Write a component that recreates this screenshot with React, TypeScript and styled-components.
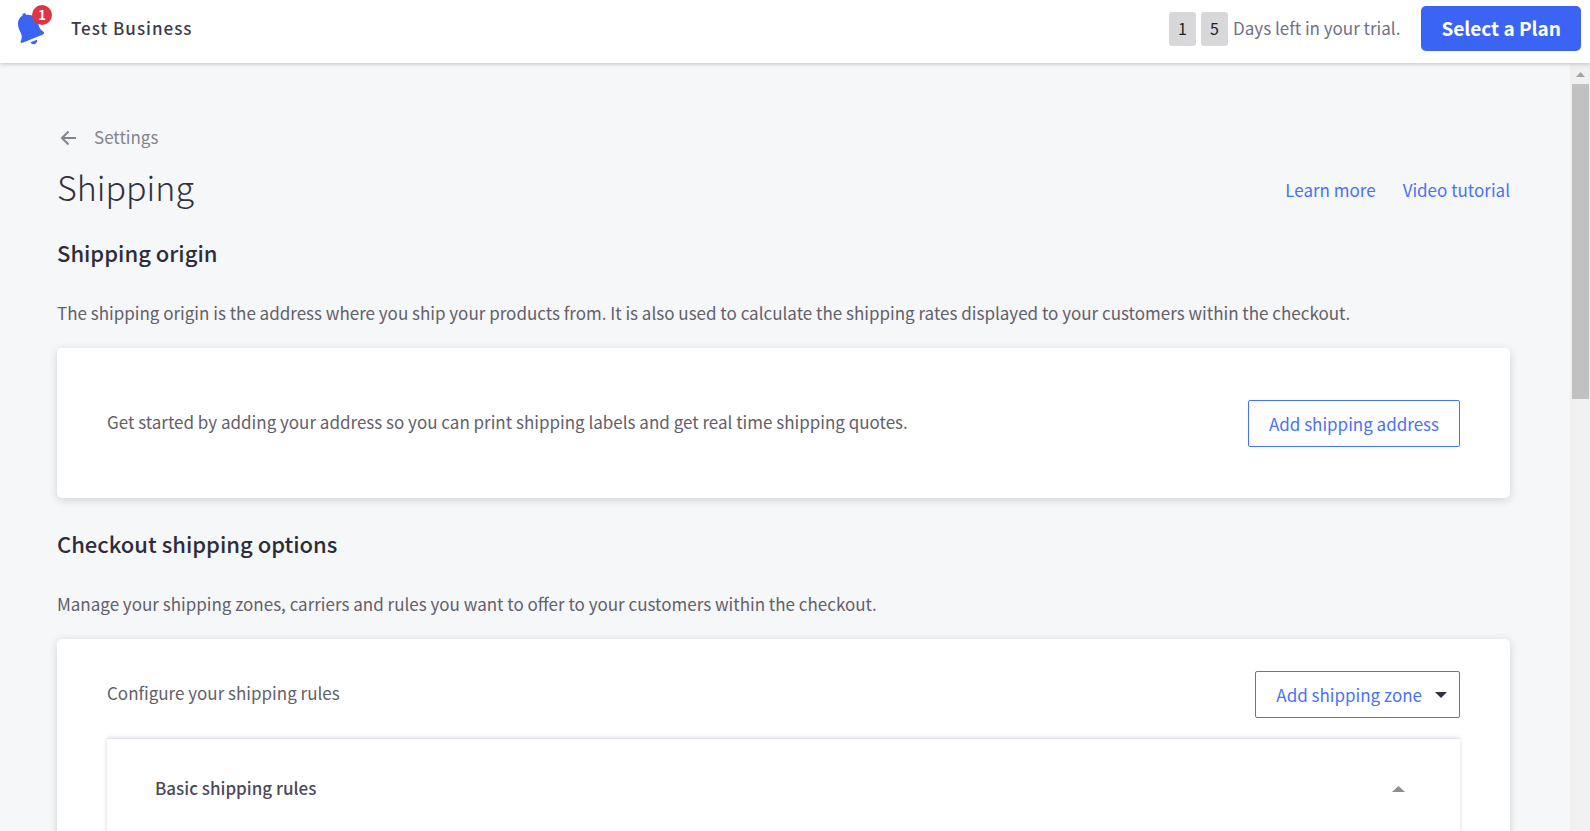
import React from "react";
import styled, { createGlobalStyle } from "styled-components";

const Global = createGlobalStyle`
  *, *::before, *::after { box-sizing: border-box; }
  html, body, #root { height: 100%; margin: 0; }
  body {
    background: #f6f7f9;
    color: #636069;
    font-family: "Noto Sans CJK SC", "Noto Sans", sans-serif;
    font-size: 17px;
    line-height: 24px;
    overflow: hidden;
  }
  h1, h2, h3, p { margin: 0; }
  button { font: inherit; cursor: pointer; }
  a { text-decoration: none; }
`;

const Shell = styled.div`
  display: flex;
  flex-direction: column;
  height: 100vh;
`;

const TopBar = styled.header`
  position: relative;
  z-index: 1;
  display: flex;
  align-items: center;
  flex: none;
  height: 63px;
  padding: 0 9px 6px 16px;
  background: #fff;
  box-shadow: 0 1px 4px rgba(45, 45, 65, 0.25);
`;

const BellButton = styled.button`
  position: relative;
  width: 32px;
  height: 36px;
  margin-right: 23px;
  padding: 0;
  border: 0;
  background: none;

  svg { display: block; }
`;

const Badge = styled.span`
  position: absolute;
  top: -6px;
  right: -4px;
  width: 20px;
  height: 20px;
  border-radius: 50%;
  background: #dc3545;
  color: #fff;
  font-size: 13px;
  font-weight: 700;
  line-height: 20px;
  text-align: center;
`;

const BusinessName = styled.span`
  padding-bottom: 2px;
  color: #3b3a4a;
  font-weight: 500;
  letter-spacing: 1px;
`;

const Trial = styled.div`
  display: flex;
  align-items: center;
  gap: 5px;
  margin: 0 21px 0 auto;
  color: #6f7089;
`;

const TrialText = styled.span`
  padding-bottom: 2px;
`;

const Digit = styled.span`
  display: grid;
  place-items: center;
  width: 27px;
  height: 34px;
  padding-bottom: 1px;
  border-radius: 3px;
  background: #d8d8da;
  color: #222226;
  font-size: 16px;
`;

const PlanButton = styled.button`
  height: 45px;
  padding: 0 20px 2px;
  border: 0;
  border-radius: 5px;
  background: #3c64f4;
  color: #fff;
  font-size: 19px;
  font-weight: 700;
`;

const Body = styled.div`
  display: flex;
  flex: 1;
  min-height: 0;
`;

const Main = styled.main`
  flex: 1;
  min-width: 0;
  padding: 62px 60px 0 57px;
  overflow: hidden;
`;

const BackLink = styled.a`
  display: inline-flex;
  align-items: center;
  gap: 15px;
  color: #85838b;
  vertical-align: top;
`;

const TitleRow = styled.div`
  display: flex;
  align-items: center;
  justify-content: space-between;
  margin-top: 15px;
`;

const Title = styled.h1`
  color: #32303f;
  font-size: 34px;
  font-weight: 200;
  line-height: 46px;
`;

const Links = styled.nav`
  display: flex;
  gap: 27px;
  padding-top: 6px;
`;

const TextLink = styled.a`
  color: #4a71fa;
`;

const Section = styled.section`
  margin-top: 27px;

  & + & { margin-top: 30px; }
`;

const SectionTitle = styled.h2`
  color: #2e2c3b;
  font-size: 22px;
  font-weight: 500;
  line-height: 30px;
`;

const Intro = styled.p`
  margin: 34px 0 23px;
`;

const Card = styled.div<{ $compact?: boolean }>`
  padding: ${(p) => (p.$compact ? "32px 50px" : "52px 50px 51px")};
  border-radius: 5px;
  background: #fff;
  box-shadow: 0 2px 8px rgba(45, 45, 65, 0.18);
`;

const CardRow = styled.div`
  display: flex;
  align-items: center;
  justify-content: space-between;
`;

const CardText = styled.p`
  padding-bottom: 4px;
`;

const OutlineButton = styled.button`
  display: flex;
  align-items: center;
  gap: 13px;
  height: 47px;
  padding: 0 20px;
  border: 1px solid #4a71fa;
  border-radius: 2px;
  background: #fff;
  color: #4a71fa;
`;

const MenuButton = styled(OutlineButton)`
  padding-right: 12px;
`;

const RulePanel = styled.div`
  display: flex;
  align-items: flex-start;
  justify-content: space-between;
  height: 240px;
  margin-top: 20px;
  padding: 37px 55px 0 48px;
  border-top: 1px solid #e4e4ec;
  box-shadow: 0 0 4px rgba(45, 45, 65, 0.18);
`;

const RuleTitle = styled.h3`
  color: #4b4958;
  font-size: 17px;
  font-weight: 500;
  line-height: 24px;
`;

const Toggle = styled.button`
  display: grid;
  place-items: center;
  height: 26px;
  padding: 0;
  border: 0;
  background: none;
`;

const ScrollTrack = styled.div`
  display: flex;
  flex-direction: column;
  align-items: center;
  flex: none;
  width: 20px;
  padding: 0 1px 0 2px;
  background: #f0f0f0;

  svg { margin: 9px 0 7px; }
`;

const ScrollThumb = styled.div`
  width: 17px;
  height: 41%;
  background: #c1c1c1;
`;

function Caret({ up, width = 12, height = 6, color }: { up?: boolean; width?: number; height?: number; color: string }) {
  return (
    <svg width={width} height={height} viewBox="0 0 12 6" preserveAspectRatio="none" aria-hidden="true">
      <path d={up ? "M0 6 6 0l6 6z" : "M0 0h12L6 6z"} fill={color} />
    </svg>
  );
}

export default function App() {
  return (
    <Shell>
      <Global />
      <TopBar>
        <BellButton aria-label="Notifications">
          <svg width="32" height="36" viewBox="0 0 32 36" aria-hidden="true">
            <g fill="#3c64f4">
              <path d="M6.500 4.500C6.200 3 7.200 2.200 8.300 2.200c1 0 1.700.6 2 1.700 5.600-.8 10.400 2.400 11.700 7.700 1.200 4.800 1.800 6.700 5.300 9 1.200.9.900 2.300-.4 2.800L6.700 31.800c-1.600.6-2.700-.6-1.900-2 1.900-3.600.8-6.200-1.200-10.200C.9 13.600 1.500 7.300 6.500 4.500z" />
              <path d="M14.500 31.200l6.500-2.500c.4 2-.5 3.600-2.100 4.200-1.700.6-3.500 0-4.400-1.700z" />
            </g>
          </svg>
          <Badge>1</Badge>
        </BellButton>
        <BusinessName>Test Business</BusinessName>
        <Trial>
          <Digit>1</Digit>
          <Digit>5</Digit>
          <TrialText>Days left in your trial.</TrialText>
        </Trial>
        <PlanButton>Select a Plan</PlanButton>
      </TopBar>
      <Body>
        <Main>
          <BackLink href="#settings">
            <svg width="22" height="24" viewBox="0 0 22 24" fill="none" stroke="#85838b" strokeWidth="2" aria-hidden="true">
              <path d="M19 13H5M11.500 6.500 5 13l6.500 6.500" />
            </svg>
            Settings
          </BackLink>
          <TitleRow>
            <Title>Shipping</Title>
            <Links>
              <TextLink href="#learn">Learn more</TextLink>
              <TextLink href="#video">Video tutorial</TextLink>
            </Links>
          </TitleRow>
          <Section>
            <SectionTitle>Shipping origin</SectionTitle>
            <Intro>
              The shipping origin is the address where you ship your products from. It is also used to calculate the
              shipping rates displayed to your customers within the checkout.
            </Intro>
            <Card>
              <CardRow>
                <CardText>
                  Get started by adding your address so you can print shipping labels and get real time shipping quotes.
                </CardText>
                <OutlineButton>Add shipping address</OutlineButton>
              </CardRow>
            </Card>
          </Section>
          <Section>
            <SectionTitle>Checkout shipping options</SectionTitle>
            <Intro>Manage your shipping zones, carriers and rules you want to offer to your customers within the checkout.</Intro>
            <Card $compact>
              <CardRow>
                <CardText>Configure your shipping rules</CardText>
                <MenuButton>
                  Add shipping zone
                  <Caret color="#32303f" />
                </MenuButton>
              </CardRow>
              <RulePanel>
                <RuleTitle>Basic shipping rules</RuleTitle>
                <Toggle aria-label="Collapse basic shipping rules">
                  <Caret up width={13} color="#8b908f" />
                </Toggle>
              </RulePanel>
            </Card>
          </Section>
        </Main>
        <ScrollTrack>
          <Caret up width={9} height={5} color="#a3a3a3" />
          <ScrollThumb />
        </ScrollTrack>
      </Body>
    </Shell>
  );
}
